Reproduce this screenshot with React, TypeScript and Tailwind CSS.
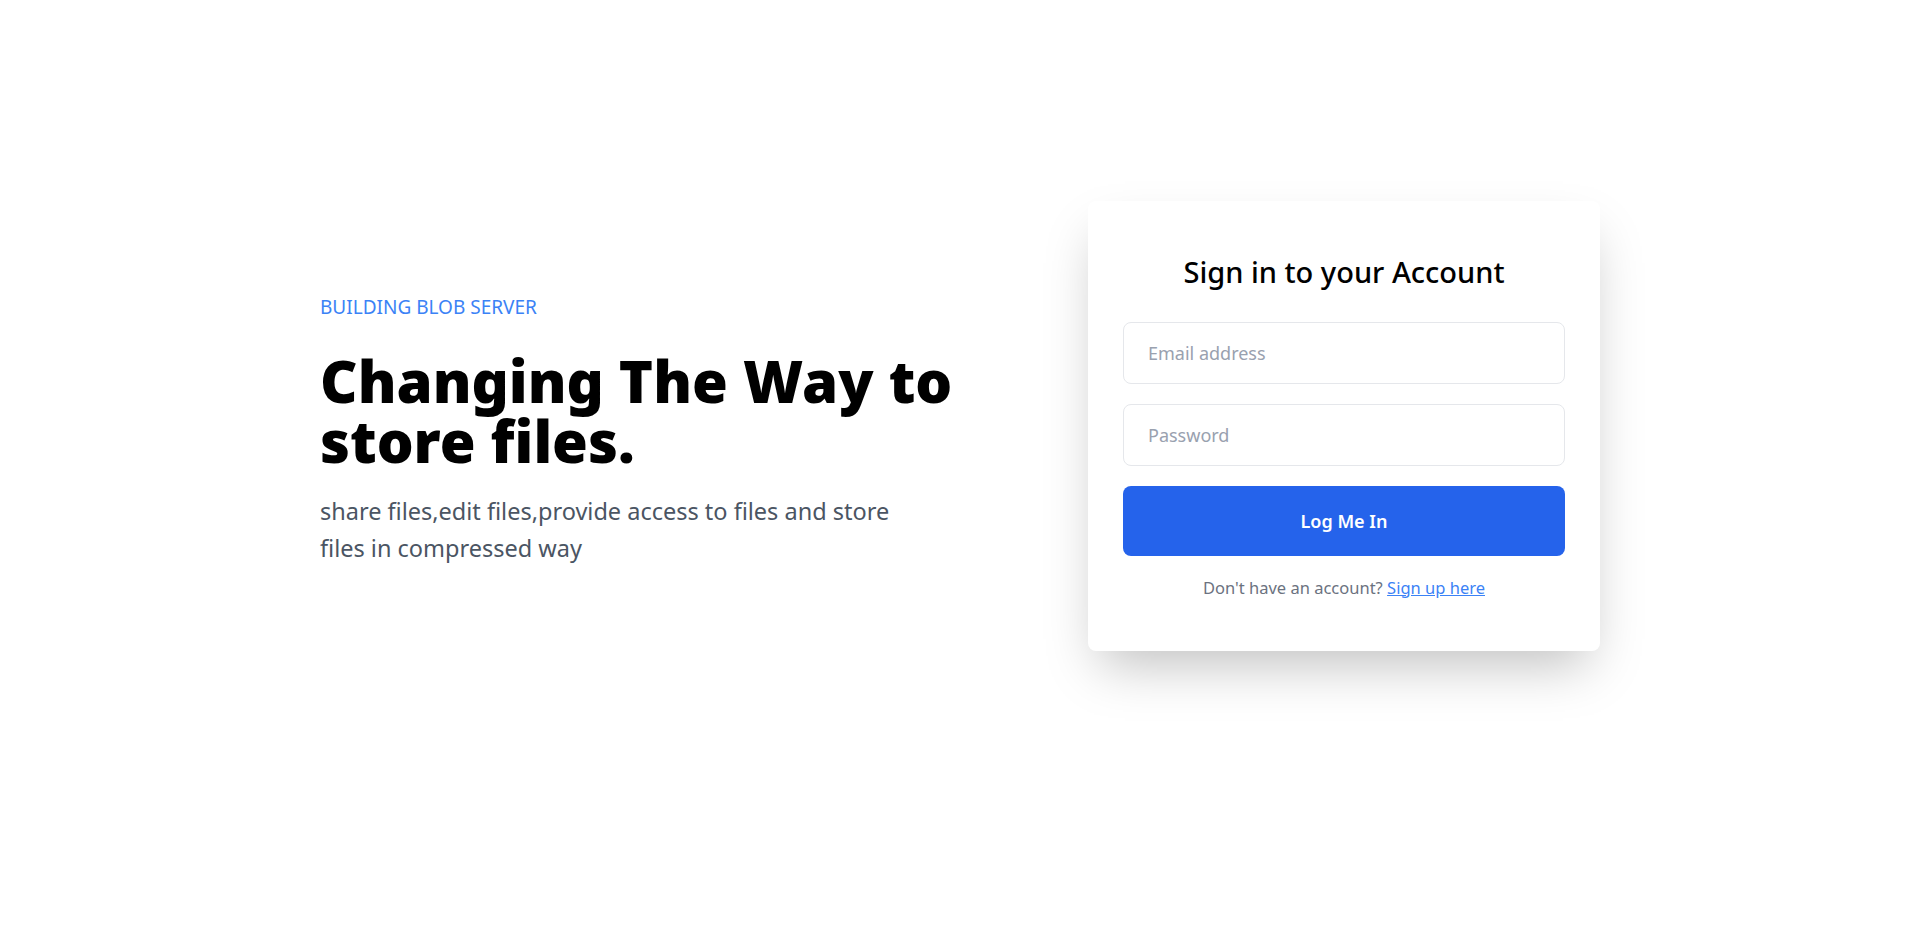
export default function App() {
  return (
    <div className="min-h-screen bg-white font-['Noto_Sans',sans-serif] text-black">
      <div className="mx-auto flex h-[852px] max-w-7xl items-center justify-between">
        {/* Hero */}
        <div className="mt-2 max-w-2xl">
          <p className="text-[19px] uppercase text-[#3b82f6]">Building Blob Server</p>
          <h1 className="mt-[29px] text-[58px] font-black leading-[60px]">Changing The Way to store files.</h1>
          <p className="mt-[22px] max-w-[600px] text-[23.5px] leading-[37px] text-[#4b5563]">
            share files,edit files,provide access to files and store files in compressed way
          </p>
        </div>

        {/* Login card */}
        <div className="w-full max-w-lg rounded-lg bg-white px-[35px] pt-[53px] pb-[51px] shadow-2xl">
          <h2 className="text-center text-[29px] font-medium leading-9">Sign in to your Account</h2>
          <form className="mt-8 flex flex-col gap-5" onSubmit={(e) => e.preventDefault()}>
            <input
              type="email"
              placeholder="Email address"
              className="rounded-lg border border-gray-200 px-6 py-4 text-lg outline-none placeholder:text-gray-400"
            />
            <input
              type="password"
              placeholder="Password"
              className="rounded-lg border border-gray-200 px-6 py-4 text-lg outline-none placeholder:text-gray-400"
            />
            <button type="submit" className="h-[70px] rounded-lg bg-[#2563eb] text-lg font-semibold text-white">
              Log Me In
            </button>
          </form>
          <p className="mt-5 text-center text-[16.5px] text-[#6b7280]">
            Don't have an account?{" "}
            <a href="#" className="text-[#3b82f6] underline">
              Sign up here
            </a>
          </p>
        </div>
      </div>
    </div>
  );
}
